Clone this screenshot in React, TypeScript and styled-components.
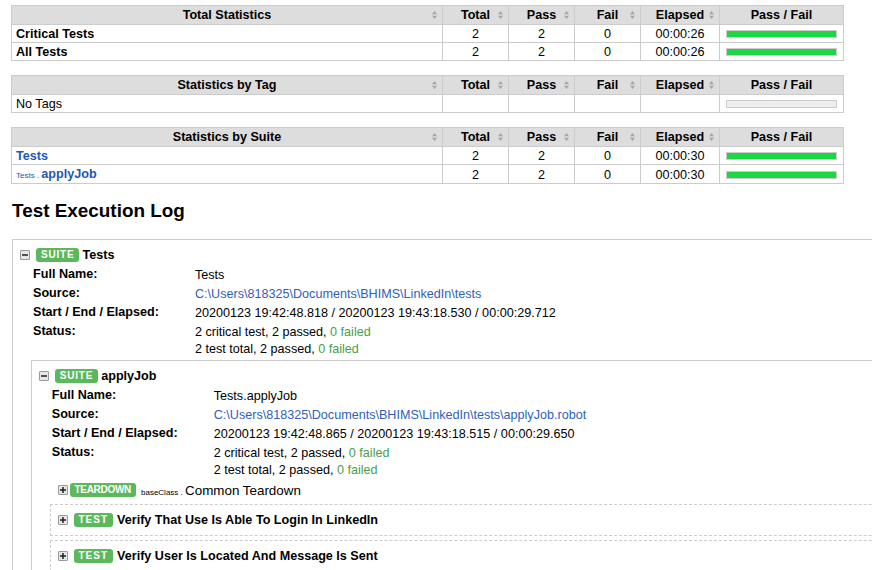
import React from 'react';
import styled, { createGlobalStyle } from 'styled-components';

const GlobalStyle = createGlobalStyle`
  html, body { margin: 0; padding: 0; overflow: hidden; background: #fff; }
  body {
    font-family: "Liberation Sans", Arial, Helvetica, sans-serif;
    font-size: 12.6px;
    color: #000;
  }
`;

const Page = styled.div`
  padding: 5px 0 0 11px;
  width: 1300px;
`;

const StatsStack = styled.div`
  display: flex;
  flex-direction: column;
  gap: 14px;
`;

const StatTable = styled.table`
  width: 832px;
  table-layout: fixed;
  border-collapse: collapse;
  empty-cells: show;
`;

const HeadCell = styled.th`
  position: relative;
  background: #ddd;
  border: 1px solid #ccc;
  padding: 2px 4px 1px;
  line-height: 15px;
  font-weight: bold;
  text-align: center;
  white-space: nowrap;
`;

const SortMark = styled.svg`
  position: absolute;
  right: 5px;
  top: 50%;
  transform: translateY(-50%);
`;

const Cell = styled.td<{ $center?: boolean; $bold?: boolean }>`
  border: 1px solid #ccc;
  padding: 2px 4px 0;
  line-height: 15px;
  text-align: ${p => (p.$center ? 'center' : 'left')};
  font-weight: ${p => (p.$bold ? 'bold' : 'normal')};
  white-space: nowrap;
`;

const GraphCell = styled.td`
  border: 1px solid #ccc;
  padding: 1px 6px 0;
  vertical-align: middle;
`;

const Graph = styled.div`
  height: 6px;
  border: 1px solid #ccc;
  background: #eee;
`;

const PassBar = styled.div`
  height: 100%;
  background: #1ed643;
`;

const SuiteLink = styled.span`
  color: #2257b4;
  font-weight: bold;
`;

const ParentName = styled.span`
  font-size: 8px;
  font-weight: normal;
`;

const Heading = styled.h2`
  margin: 16px 0 17px 1px;
  font-size: 18.9px;
  line-height: 22px;
  font-weight: bold;
`;

type Variant = 'suite' | 'test' | 'keyword';

const ElementBox = styled.div<{ $variant: Variant }>`
  border: ${p =>
    p.$variant === 'suite' ? '1px solid #ccc' : p.$variant === 'test' ? '1px dashed #ccc' : '0'};
  padding: ${p => (p.$variant === 'keyword' ? '1px 0 0 5px' : '5px 4px')};
  margin-top: ${p => (p.$variant === 'suite' ? '2px' : p.$variant === 'test' ? '4px' : '0')};
`;

const OuterSuite = styled(ElementBox)`
  margin: 0 0 0 1px;
`;

const Header = styled.div`
  display: flex;
  align-items: center;
  height: 20px;
  padding-left: 3px;
  white-space: nowrap;
`;

const Toggle = styled.span<{ $after: number }>`
  box-sizing: border-box;
  width: 10px;
  height: 10px;
  border: 1px solid #9a9a9a;
  background: #e6e6e6;
  border-radius: 1px;
  display: flex;
  align-items: center;
  justify-content: center;
  flex: none;
  margin-right: ${p => p.$after}px;
`;

const Label = styled.span<{ $spacing: number; $after: number }>`
  background: #5cb85c;
  color: #fff;
  font-size: 10px;
  font-weight: bold;
  line-height: 14px;
  height: 14px;
  padding: 0 5px;
  border-radius: 3px;
  letter-spacing: ${p => p.$spacing}px;
  margin-right: ${p => p.$after}px;
  flex: none;
`;

const ElementName = styled.span<{ $bold?: boolean; $size?: number }>`
  font-weight: ${p => (p.$bold ? 'bold' : 'normal')};
  font-size: ${p => (p.$size ? `${p.$size}px` : 'inherit')};
`;

const Children = styled.div`
  display: flex;
  flex-direction: column;
  margin-left: 13.75px;
`;

const Meta = styled.table`
  margin-left: 16px;
  border-collapse: collapse;
  border-spacing: 0;
`;

const MetaKey = styled.th`
  width: 162px;
  text-align: left;
  vertical-align: top;
  font-weight: bold;
  padding: 1px 0;
  line-height: 17px;
  white-space: nowrap;
`;

const MetaVal = styled.td`
  vertical-align: top;
  padding: 2px 0 0;
  line-height: 17px;
  white-space: nowrap;
`;

const PathLink = styled.span`
  color: #2f5fba;
`;

const Passed = styled.span`
  color: #4a9e4a;
`;

const SortIcon = () => (
  <SortMark width="5" height="8" viewBox="0 0 5 8">
    <polygon points="0,3.2 2.5,0 5,3.2" fill="#a6a6a6" />
    <polygon points="0,4.8 2.5,8 5,4.8" fill="#a6a6a6" />
  </SortMark>
);

const ToggleIcon = ({ open, after }: { open: boolean; after: number }) => (
  <Toggle $after={after}>
    <svg width="6" height="6" viewBox="0 0 6 6">
      <rect x="0" y="2.25" width="6" height="1.5" fill="#222" />
      {!open && <rect x="2.25" y="0" width="1.5" height="6" fill="#222" />}
    </svg>
  </Toggle>
);

type StatRow = { name: React.ReactNode; bold?: boolean; total?: string; pass?: string; fail?: string; elapsed?: string; empty?: boolean };

const StatsTable = ({ title, rows }: { title: string; rows: StatRow[] }) => (
  <StatTable>
    <colgroup>
      <col style={{ width: 431 }} />
      <col style={{ width: 66 }} />
      <col style={{ width: 66 }} />
      <col style={{ width: 66 }} />
      <col style={{ width: 79 }} />
      <col style={{ width: 124 }} />
    </colgroup>
    <thead>
      <tr>
        <HeadCell>{title}<SortIcon /></HeadCell>
        <HeadCell>Total<SortIcon /></HeadCell>
        <HeadCell>Pass<SortIcon /></HeadCell>
        <HeadCell>Fail<SortIcon /></HeadCell>
        <HeadCell>Elapsed<SortIcon /></HeadCell>
        <HeadCell>Pass / Fail</HeadCell>
      </tr>
    </thead>
    <tbody>
      {rows.map((r, i) => (
        <tr key={i}>
          <Cell $bold={r.bold}>{r.name}</Cell>
          <Cell $center>{r.total}</Cell>
          <Cell $center>{r.pass}</Cell>
          <Cell $center>{r.fail}</Cell>
          <Cell $center>{r.elapsed}</Cell>
          <GraphCell>
            <Graph>{!r.empty && <PassBar style={{ width: '100%' }} />}</Graph>
          </GraphCell>
        </tr>
      ))}
    </tbody>
  </StatTable>
);

const StatusValue = () => (
  <>
    2 critical test, 2 passed, <Passed>0 failed</Passed>
    <br />
    2 test total, 2 passed, <Passed>0 failed</Passed>
  </>
);

const Metadata = ({ fullName, source, times }: { fullName: string; source: string; times: string }) => (
  <Meta>
    <tbody>
      <tr>
        <MetaKey>Full Name:</MetaKey>
        <MetaVal>{fullName}</MetaVal>
      </tr>
      <tr>
        <MetaKey>Source:</MetaKey>
        <MetaVal><PathLink>{source}</PathLink></MetaVal>
      </tr>
      <tr>
        <MetaKey>Start / End / Elapsed:</MetaKey>
        <MetaVal>{times}</MetaVal>
      </tr>
      <tr>
        <MetaKey>Status:</MetaKey>
        <MetaVal><StatusValue /></MetaVal>
      </tr>
    </tbody>
  </Meta>
);

const TestItem = ({ name }: { name: string }) => (
  <ElementBox $variant="test">
    <Header>
      <ToggleIcon open={false} after={6} />
      <Label $spacing={1} $after={4}>TEST</Label>
      <ElementName $bold>{name}</ElementName>
    </Header>
  </ElementBox>
);

export default function App() {
  return (
    <>
      <GlobalStyle />
      <Page>
        <StatsStack>
          <StatsTable
            title="Total Statistics"
            rows={[
              { name: 'Critical Tests', bold: true, total: '2', pass: '2', fail: '0', elapsed: '00:00:26' },
              { name: 'All Tests', bold: true, total: '2', pass: '2', fail: '0', elapsed: '00:00:26' },
            ]}
          />
          <StatsTable title="Statistics by Tag" rows={[{ name: 'No Tags', empty: true }]} />
          <StatsTable
            title="Statistics by Suite"
            rows={[
              { name: <SuiteLink>Tests</SuiteLink>, total: '2', pass: '2', fail: '0', elapsed: '00:00:30' },
              {
                name: (
                  <SuiteLink>
                    <ParentName>Tests . </ParentName>applyJob
                  </SuiteLink>
                ),
                total: '2',
                pass: '2',
                fail: '0',
                elapsed: '00:00:30',
              },
            ]}
          />
        </StatsStack>

        <Heading>Test Execution Log</Heading>

        <OuterSuite $variant="suite">
          <Header>
            <ToggleIcon open after={6} />
            <Label $spacing={0.8} $after={3}>SUITE</Label>
            <ElementName $bold>Tests</ElementName>
          </Header>
          <Metadata
            fullName="Tests"
            source="C:\Users\818325\Documents\BHIMS\LinkedIn\tests"
            times="20200123 19:42:48.818 / 20200123 19:43:18.530 / 00:00:29.712"
          />
          <Children>
            <ElementBox $variant="suite">
              <Header>
                <ToggleIcon open after={6} />
                <Label $spacing={0.8} $after={3}>SUITE</Label>
                <ElementName $bold>applyJob</ElementName>
              </Header>
              <Metadata
                fullName="Tests.applyJob"
                source="C:\Users\818325\Documents\BHIMS\LinkedIn\tests\applyJob.robot"
                times="20200123 19:42:48.865 / 20200123 19:43:18.515 / 00:00:29.650"
              />
              <Children>
                <ElementBox $variant="keyword">
                  <Header>
                    <ToggleIcon open={false} after={2} />
                    <Label $spacing={-0.3} $after={5}>TEARDOWN</Label>
                    <ElementName $size={13.4}>
                      <ParentName>baseClass . </ParentName>Common Teardown
                    </ElementName>
                  </Header>
                </ElementBox>
                <TestItem name="Verify That Use Is Able To Login In LinkedIn" />
                <TestItem name="Verify User Is Located And Message Is Sent" />
              </Children>
            </ElementBox>
          </Children>
        </OuterSuite>
      </Page>
    </>
  );
}
